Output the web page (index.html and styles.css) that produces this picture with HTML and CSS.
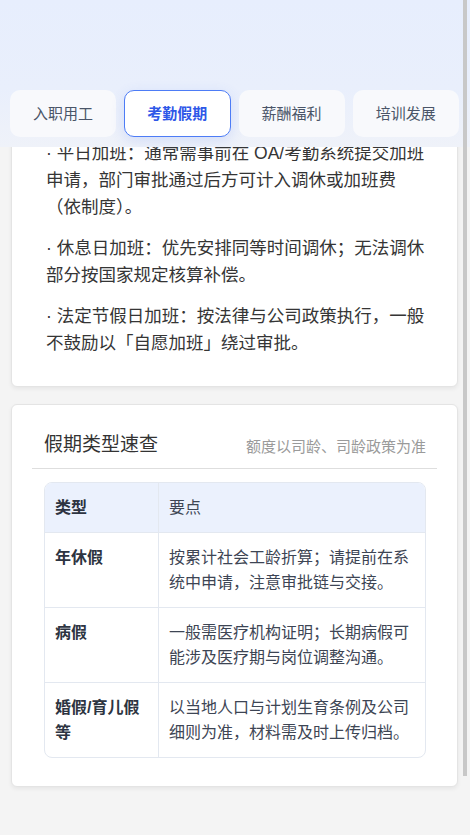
FILE: index.html
```html
<!DOCTYPE html>
<html lang="zh-CN">
<head>
<meta charset="utf-8">
<title>考勤假期</title>
<link rel="stylesheet" href="styles.css">
</head>
<body>
<header class="top">
  <nav class="tabs">
    <button class="tab">入职用工</button>
    <button class="tab active">考勤假期</button>
    <button class="tab">薪酬福利</button>
    <button class="tab">培训发展</button>
  </nav>
</header>

<main class="main">
  <section class="card card-text">
    <p>· 平日加班：通常需事前在 OA/考勤系统提交加班申请，部门审批通过后方可计入调休或加班费（依制度）。</p>
    <p>· 休息日加班：优先安排同等时间调休；无法调休部分按国家规定核算补偿。</p>
    <p>· 法定节假日加班：按法律与公司政策执行，一般不鼓励以「自愿加班」绕过审批。</p>
  </section>

  <section class="card card-table">
    <div class="card-head">
      <h2 class="card-title">假期类型速查</h2>
      <span class="card-note">额度以司龄、司龄政策为准</span>
    </div>
    <div class="card-body">
      <table class="qtable">
        <colgroup><col class="c1"><col></colgroup>
        <thead>
          <tr><th class="k">类型</th><th>要点</th></tr>
        </thead>
        <tbody>
          <tr><td class="k">年休假</td><td>按累计社会工龄折算；请提前在系统中申请，注意审批链与交接。</td></tr>
          <tr><td class="k">病假</td><td>一般需医疗机构证明；长期病假可能涉及医疗期与岗位调整沟通。</td></tr>
          <tr class="last"><td class="k">婚假/育儿假等</td><td>以当地人口与计划生育条例及公司细则为准，材料需及时上传归档。</td></tr>
        </tbody>
      </table>
    </div>
  </section>
</main>

<div class="scrollbar"></div>
</body>
</html>
```

FILE: styles.css
```css
* { box-sizing: border-box; }

html, body {
  margin: 0;
  padding: 0;
  height: 100%;
  overflow: hidden;
}

body {
  background: #f4f4f4;
  font-family: "Liberation Sans", "Noto Sans CJK SC", sans-serif;
  color: #333;
}

.top {
  position: fixed;
  top: 0;
  left: 0;
  right: 0;
  height: 147px;
  z-index: 5;
  background: linear-gradient(180deg, #e7eefd 0%, #e9effc 60%, #eff2f9 100%);
  padding: 90px 11px 0 10px;
}

.tabs {
  display: grid;
  grid-template-columns: repeat(4, 1fr);
  gap: 8px;
}

.tab {
  height: 47px;
  border: 1px solid transparent;
  border-radius: 10px;
  background: #f8f9fc;
  color: #4a5568;
  font-family: inherit;
  font-size: 15px;
  padding: 0;
  line-height: 45px;
}

.tab.active {
  background: #ffffff;
  border-color: #4d7cf6;
  color: #2e58e8;
  font-weight: 700;
  box-shadow: 0 4px 14px rgba(70, 110, 240, 0.16);
}

.main {
  padding: 100px 12px 0 11px;
}

.card {
  background: #fff;
  border: 1px solid #e4e4e4;
  border-radius: 6px;
  box-shadow: 0 2px 4px rgba(0, 0, 0, 0.06);
}

.card-text {
  padding: 39px 27px 29px 34px;
  font-size: 17.5px;
  line-height: 27.2px;
  color: #353535;
}

.card-text p {
  margin: 0 0 13.5px;
}

.card-text p:last-child {
  margin-bottom: 0;
}

.card-table {
  margin-top: 17px;
  padding: 20px 20px 20px;
}

.card-head {
  display: flex;
  justify-content: space-between;
  align-items: center;
  padding: 7px 11px 10px 12px;
  border-bottom: 1px solid #dedede;
}

.card-title {
  margin: 0;
  font-size: 19px;
  line-height: 26px;
  font-weight: 400;
  color: #333;
}

.card-note {
  font-size: 15px;
  color: #9a9a9a;
}

.card-body {
  padding: 13px 11px 8px 12px;
}

.qtable {
  width: 100%;
  table-layout: fixed;
  border-collapse: separate;
  border-spacing: 0;
  border: 1px solid #e3e8f0;
  border-radius: 8px;
  overflow: hidden;
  font-size: 16px;
  line-height: 25px;
}

.qtable .c1 { width: 114px; }

.qtable th,
.qtable td {
  padding: 12px 10px;
  text-align: left;
  vertical-align: top;
  border-bottom: 1px solid #e3e8f0;
  color: #3d4554;
  font-weight: 400;
}

.qtable th {
  background: #ebf1fd;
}

.qtable .k {
  border-right: 1px solid #e3e8f0;
  font-weight: 700;
  color: #2d3441;
}

.qtable tr.last td {
  border-bottom: none;
}

.scrollbar {
  position: fixed;
  top: 0;
  right: 3px;
  width: 4px;
  height: 776px;
  background: #c8c8c8;
  z-index: 10;
}
```
